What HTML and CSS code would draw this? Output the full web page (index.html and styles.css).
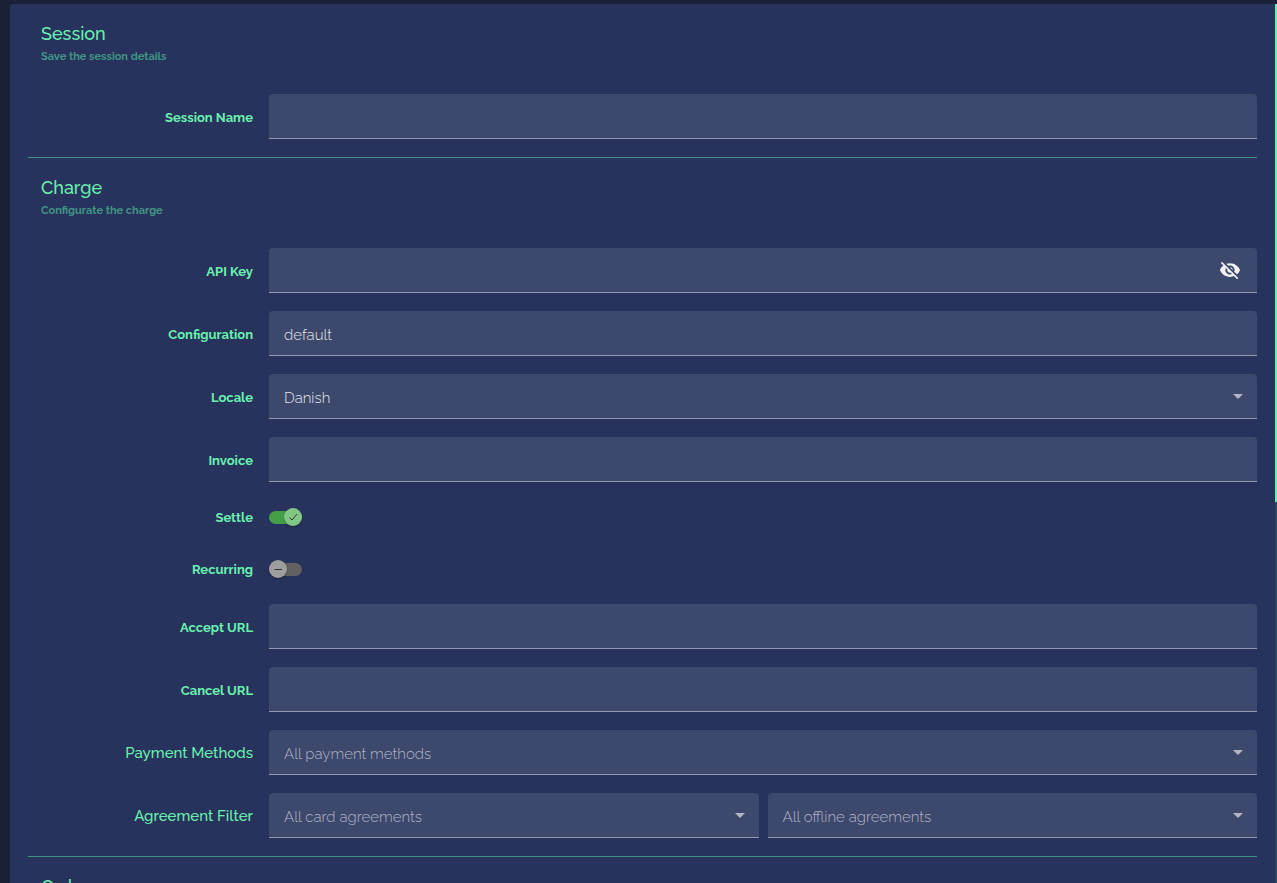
FILE: index.html
```html
<!DOCTYPE html>
<html lang="en">
<head>
<meta charset="utf-8">
<meta name="viewport" content="width=device-width, initial-scale=1">
<title>Session</title>
<link rel="stylesheet" href="styles.css">
</head>
<body>
<main class="panel">
  <form class="form">
    <section class="section">
      <h2 class="title">Session</h2>
      <p class="subtitle">Save the session details</p>
      <div class="rows">
        <div class="row">
          <label class="label" for="session-name">Session Name</label>
          <div class="field"><input class="control" id="session-name" type="text"></div>
        </div>
      </div>
    </section>

    <section class="section">
      <h2 class="title">Charge</h2>
      <p class="subtitle">Configurate the charge</p>
      <div class="rows">
        <div class="row">
          <label class="label" for="api-key">API Key</label>
          <div class="field">
            <input class="control" id="api-key" type="password">
            <button class="reveal" type="button" aria-label="Show API key">
              <svg viewBox="0 0 24 24" width="22" height="22" fill="currentColor"><path d="M12 7c2.76 0 5 2.24 5 5 0 .65-.13 1.26-.36 1.83l2.92 2.92c1.51-1.26 2.7-2.89 3.43-4.75-1.73-4.39-6-7.5-11-7.5-1.4 0-2.74.25-3.98.7l2.16 2.16C10.74 7.13 11.35 7 12 7zM2 4.27l2.28 2.28.46.46C3.08 8.3 1.78 10.02 1 12c1.73 4.39 6 7.5 11 7.5 1.55 0 3.03-.3 4.38-.84l.42.42L19.73 22 21 20.73 3.27 3 2 4.27zM7.53 9.8l1.55 1.55c-.05.21-.08.43-.08.65 0 1.66 1.34 3 3 3 .22 0 .44-.03.65-.08l1.55 1.55c-.67.33-1.41.53-2.2.53-2.76 0-5-2.24-5-5 0-.79.2-1.53.53-2.2zm4.31-.78l3.15 3.15.02-.16c0-1.66-1.34-3-3-3l-.17.01z"/></svg>
            </button>
          </div>
        </div>
        <div class="row">
          <label class="label" for="configuration">Configuration</label>
          <div class="field"><input class="control" id="configuration" type="text" value="default"></div>
        </div>
        <div class="row">
          <label class="label" for="locale">Locale</label>
          <div class="field">
            <select class="control" id="locale"><option>Danish</option></select>
            <svg class="arrow" viewBox="0 0 10 5"><path d="M0 0h10L5 5z"/></svg>
          </div>
        </div>
        <div class="row">
          <label class="label" for="invoice">Invoice</label>
          <div class="field"><input class="control" id="invoice" type="text"></div>
        </div>
        <div class="row row-switch">
          <label class="label" for="settle">Settle</label>
          <div class="switch">
            <input class="toggle" id="settle" type="checkbox" role="switch" checked>
            <span class="thumb thumb-on"><svg viewBox="0 0 18 18"><path d="M5.500 9.500l2.500 2.500L13 6"/></svg></span>
          </div>
        </div>
        <div class="row row-switch">
          <label class="label" for="recurring">Recurring</label>
          <div class="switch">
            <input class="toggle" id="recurring" type="checkbox" role="switch">
            <span class="thumb"><svg viewBox="0 0 18 18"><path d="M5.500 9.500h7.500"/></svg></span>
          </div>
        </div>
        <div class="row">
          <label class="label" for="accept-url">Accept URL</label>
          <div class="field"><input class="control" id="accept-url" type="url"></div>
        </div>
        <div class="row">
          <label class="label" for="cancel-url">Cancel URL</label>
          <div class="field"><input class="control" id="cancel-url" type="url"></div>
        </div>
        <div class="row">
          <label class="label label-large" for="payment-methods">Payment Methods</label>
          <div class="field">
            <select class="control control-empty" id="payment-methods"><option>All payment methods</option></select>
            <svg class="arrow" viewBox="0 0 10 5"><path d="M0 0h10L5 5z"/></svg>
          </div>
        </div>
        <div class="row">
          <label class="label label-large" for="card-agreements">Agreement Filter</label>
          <div class="pair">
            <div class="field">
              <select class="control control-empty" id="card-agreements"><option>All card agreements</option></select>
              <svg class="arrow" viewBox="0 0 10 5"><path d="M0 0h10L5 5z"/></svg>
            </div>
            <div class="field">
              <select class="control control-empty" id="offline-agreements" aria-label="Offline agreements"><option>All offline agreements</option></select>
              <svg class="arrow" viewBox="0 0 10 5"><path d="M0 0h10L5 5z"/></svg>
            </div>
          </div>
        </div>
      </div>
    </section>

    <section class="section">
      <h2 class="title">Order</h2>
    </section>
  </form>
  <div class="scrollbar"><div class="scrollbar-thumb"></div></div>
</main>
</body>
</html>
```
FILE: styles.css
```css
* {
  box-sizing: border-box;
}

body {
  margin: 0;
  height: 100vh;
  overflow: hidden;
  padding: 4px 0 0 10px;
  display: flex;
  background: #192038;
  color: #69f0ae;
  font-family: Raleway, Lato, "Open Sans", sans-serif;
}

.panel {
  position: relative;
  flex: 1;
  min-width: 0;
  overflow: hidden;
  padding: 0 20px 0 18px;
  border-top-left-radius: 3px;
  background: #27335c;
}

.section {
  padding: 15px 0 18px;
}

.section + .section {
  border-top: 1px solid #409383;
}

.title {
  margin: 0 0 0 13px;
  font-size: 18px;
  font-weight: 500;
  line-height: 30px;
}

.subtitle {
  margin: 0 0 29px 13px;
  color: #409383;
  font-size: 11px;
  font-weight: 700;
  line-height: 16px;
}

.rows {
  display: grid;
  gap: 18px;
}

.row {
  display: grid;
  grid-template-columns: 225px minmax(0, 1fr);
  column-gap: 16px;
  align-items: center;
}

.row-switch {
  min-height: 34px;
}

.label {
  padding-top: 2px;
  text-align: right;
  font-size: 13px;
  font-weight: 700;
  line-height: 20px;
}

.label-large {
  padding-top: 0;
  font-size: 15px;
  font-weight: 500;
}

.field {
  position: relative;
  min-width: 0;
}

.pair {
  display: grid;
  grid-template-columns: 1fr 1fr;
  gap: 9px;
}

.control {
  display: block;
  width: 100%;
  height: 45px;
  margin: 0;
  padding: 4px 40px 0 15px;
  appearance: none;
  border: 0;
  border-bottom: 1px solid #9298ad;
  border-radius: 4px 4px 0 0;
  outline: 0;
  background: #3d486d;
  color: #e4e6ec;
  font: inherit;
  font-size: 15px;
  font-weight: 300;
}

.control-empty {
  color: #afb3c3;
}

.arrow {
  position: absolute;
  top: 20px;
  right: 14px;
  width: 10px;
  height: 5px;
  fill: #b1b5c5;
  pointer-events: none;
}

.reveal {
  position: absolute;
  top: 11px;
  right: 16px;
  padding: 0;
  border: 0;
  background: none;
  color: #f0f0f0;
}

.reveal svg {
  display: block;
}

.switch {
  position: relative;
  display: flex;
  align-items: center;
  width: 33px;
  height: 18px;
}

.toggle {
  width: 33px;
  height: 13px;
  margin: 0;
  appearance: none;
  border-radius: 7px;
  background: #616161;
}

.toggle:checked {
  background: #43a047;
}

.thumb {
  position: absolute;
  top: 0;
  left: 0;
  width: 18px;
  height: 18px;
  border-radius: 50%;
  background: #9e9e9e;
  box-shadow: 0 1px 2px rgba(0, 0, 0, 0.3);
  pointer-events: none;
}

.thumb-on {
  left: auto;
  right: 0;
  background: #81c784;
}

.thumb svg {
  display: block;
  fill: none;
  stroke: #30343c;
  stroke-width: 1;
}

.scrollbar {
  position: absolute;
  top: 0;
  right: 0;
  bottom: 0;
  width: 2px;
  background: #28485f;
}

.scrollbar-thumb {
  height: 498px;
  background: #69f0ae;
}
```
